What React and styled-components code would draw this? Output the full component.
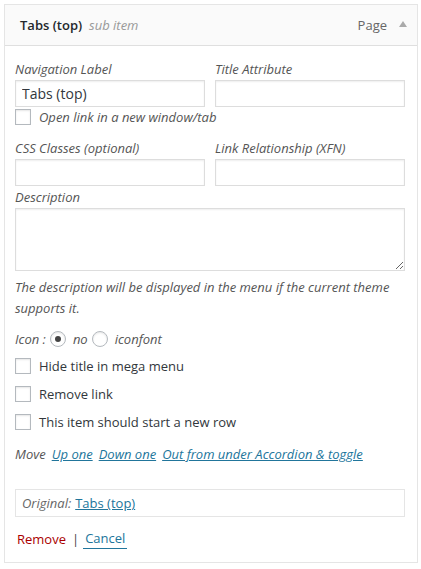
import React from 'react';
import styled, { createGlobalStyle } from 'styled-components';

const Global = createGlobalStyle`
  html, body {
    margin: 0;
    padding: 0;
    background: #fff;
  }
  body {
    font-family: "Open Sans", "Liberation Sans", sans-serif;
    font-size: 13px;
    color: #444;
  }
`;

const Page = styled.div`
  padding: 4px 3px 3px 4px;
`;

const Item = styled.div`
  border: 1px solid #e5e5e5;
  background: #fff;
  width: 412px;
  box-sizing: content-box;
`;

const Bar = styled.div`
  display: flex;
  align-items: center;
  height: 40px;
  padding: 0 10px 0 15px;
  background: #fafafa;
  border-bottom: 1px solid #dfdfdf;
`;

const Title = styled.span`
  font-weight: 600;
  color: #23282d;
  font-size: 13px;
`;

const Sub = styled.span`
  font-style: italic;
  color: #999;
  margin-left: 7px;
  flex: 1;
`;

const Type = styled.span`
  color: #666;
  margin-right: 12px;
`;

const Arrow = styled.span`
  width: 0;
  height: 0;
  border-left: 4px solid transparent;
  border-right: 4px solid transparent;
  border-bottom: 6px solid #aaa;
  margin-bottom: 2px;
`;

const Body = styled.div`
  padding: 14px 12px 13px 10px;
`;

const Row = styled.div`
  display: grid;
  grid-template-columns: 190px 190px;
  column-gap: 10px;
`;

const Field = styled.label`
  display: flex;
  flex-direction: column;
`;

const Label = styled.span`
  font-style: italic;
  color: #555;
  line-height: 18px;
  margin-bottom: 2px;
`;

const Input = styled.input`
  box-sizing: border-box;
  height: 27px;
  width: 100%;
  margin: 0;
  border: 1px solid #ddd;
  box-shadow: inset 0 1px 2px rgba(0, 0, 0, 0.07);
  padding: 2px 6px;
  font-family: inherit;
  font-size: 14px;
  color: #32373c;
  outline: none;
`;

const Area = styled.textarea`
  box-sizing: border-box;
  display: block;
  width: 390px;
  height: 63px;
  margin: 0;
  border: 1px solid #ddd;
  box-shadow: inset 0 1px 2px rgba(0, 0, 0, 0.07);
  font-family: inherit;
  outline: none;
`;

const Box = styled.span`
  box-sizing: border-box;
  display: inline-block;
  flex: none;
  width: 16px;
  height: 16px;
  border: 1px solid #b4b9be;
  background: #fff;
  box-shadow: inset 0 1px 2px rgba(0, 0, 0, 0.1);
  border-radius: ${p => (p.round ? '50%' : '0')};
  position: relative;
  ${p => p.checked && `
    &::after {
      content: '';
      position: absolute;
      left: 4px;
      top: 4px;
      width: 6px;
      height: 6px;
      border-radius: 50%;
      background: #444;
    }
  `}
`;

const Check = styled.label`
  display: flex;
  align-items: center;
  gap: 8px;
  height: 16px;
  margin-top: ${p => p.top || 0}px;
  font-style: ${p => (p.italic ? 'italic' : 'normal')};
  color: ${p => (p.italic ? '#555' : '#32373c')};
  font-size: 13px;
`;

const Section = styled.div`
  margin-top: ${p => p.top}px;
`;

const Help = styled.p`
  margin: 6px 0 0;
  font-style: italic;
  color: #555;
  line-height: 21px;
`;

const IconRow = styled.div`
  display: flex;
  align-items: center;
  margin-top: 11px;
  font-style: italic;
  color: #555;
  gap: 4px;
`;

const Opt = styled.span`
  margin: 0 0 0 3px;
`;

const MoveRow = styled.div`
  display: flex;
  gap: 6px;
  margin-top: 15px;
  font-style: italic;
  color: #555;
`;

const Link = styled.a`
  color: #21759b;
  text-decoration: underline;
  cursor: pointer;
`;

const Original = styled.div`
  box-sizing: border-box;
  width: 390px;
  height: 28px;
  margin-top: 26px;
  border: 1px solid #e5e5e5;
  display: flex;
  align-items: center;
  gap: 4px;
  padding: 0 6px;
  font-style: italic;
  color: #666;
`;

const OriginalLink = styled(Link)`
  font-style: normal;
`;

const Actions = styled.div`
  display: flex;
  align-items: center;
  margin-top: 12px;
  padding-left: 2px;
  font-size: 13px;
`;

const Remove = styled.a`
  color: #a00;
`;

const Sep = styled.span`
  color: #444;
  margin: 0 4px 0 6px;
`;

const CancelLink = styled(Link)`
  text-decoration: none;
  border-bottom: 1px solid #21759b;
  padding: 0 2px 1px 2px;
`;

export default function App() {
  return (
    <>
      <Global />
      <Page>
        <Item>
          <Bar>
            <Title>Tabs (top)</Title>
            <Sub>sub item</Sub>
            <Type>Page</Type>
            <Arrow />
          </Bar>
          <Body>
            <Row>
              <Field>
                <Label>Navigation Label</Label>
                <Input defaultValue="Tabs (top)" />
              </Field>
              <Field>
                <Label>Title Attribute</Label>
                <Input />
              </Field>
            </Row>
            <Check italic top={2}>
              <Box />
              Open link in a new window/tab
            </Check>
            <Section top={14}>
              <Row>
                <Field>
                  <Label>CSS Classes (optional)</Label>
                  <Input />
                </Field>
                <Field>
                  <Label>Link Relationship (XFN)</Label>
                  <Input />
                </Field>
              </Row>
            </Section>
            <Section top={2}>
              <Field>
                <Label>Description</Label>
                <Area />
              </Field>
              <Help>The description will be displayed in the menu if the current theme supports it.</Help>
            </Section>
            <IconRow>
              Icon :
              <Box round checked />
              <Opt>no</Opt>
              <Box round />
              <Opt>iconfont</Opt>
            </IconRow>
            <Check top={10}>
              <Box />
              Hide title in mega menu
            </Check>
            <Check top={12}>
              <Box />
              Remove link
            </Check>
            <Check top={12}>
              <Box />
              This item should start a new row
            </Check>
            <MoveRow>
              Move
              <Link>Up one</Link>
              <Link>Down one</Link>
              <Link>Out from under Accordion &amp; toggle</Link>
            </MoveRow>
            <Original>
              Original:
              <OriginalLink>Tabs (top)</OriginalLink>
            </Original>
            <Actions>
              <Remove>Remove</Remove>
              <Sep>|</Sep>
              <CancelLink>Cancel</CancelLink>
            </Actions>
          </Body>
        </Item>
      </Page>
    </>
  );
}
